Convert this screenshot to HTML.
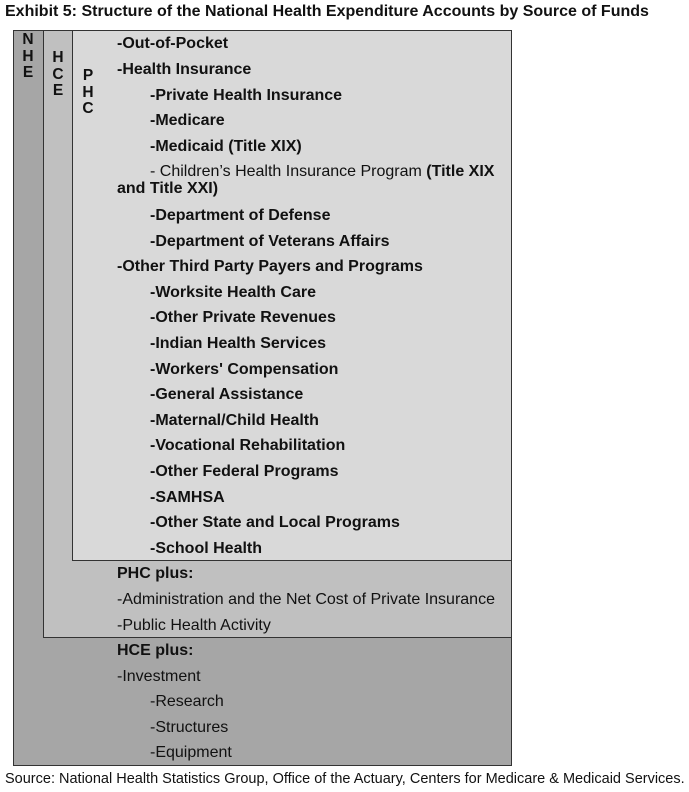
<!DOCTYPE html>
<html><head><meta charset="utf-8"><style>
body{margin:0;width:689px;height:792px;background:#fff;font-family:"Liberation Sans",Arial,sans-serif;color:#111;position:relative;overflow:hidden}
.b{position:absolute;box-sizing:border-box;border:1px solid #333}
.t{position:absolute;font-size:16px;white-space:nowrap;line-height:17px}
.bd{font-weight:bold}
.v{position:absolute;font-size:15.5px;font-weight:bold;line-height:16.5px;text-align:center;width:20px}
</style></head><body>
<div class="t bd" style="left:5px;top:3px;font-size:16px">Exhibit 5: Structure of the National Health Expenditure Accounts by Source of Funds</div>
<div class="b" style="left:13px;top:30px;width:499px;height:736px;background:#a6a6a6"></div>
<div class="b" style="left:43px;top:30px;width:469px;height:608px;background:#c0c0c0"></div>
<div class="b" style="left:72px;top:30px;width:440px;height:531px;background:#d9d9d9"></div>
<div class="v" style="left:18px;top:32px">N<br>H<br>E</div>
<div class="v" style="left:48px;top:50px">H<br>C<br>E</div>
<div class="v" style="left:78px;top:68px">P<br>H<br>C</div>
<div class="t bd" style="left:117px;top:35px">-Out-of-Pocket</div>
<div class="t bd" style="left:117px;top:61px">-Health Insurance</div>
<div class="t bd" style="left:150px;top:87px">-Private Health Insurance</div>
<div class="t bd" style="left:150px;top:112px">-Medicare</div>
<div class="t bd" style="left:150px;top:138px">-Medicaid (Title XIX)</div>
<div class="t" style="left:150px;top:163px">- Children’s Health Insurance Program <b>(Title XIX</b></div>
<div class="t bd" style="left:117px;top:180px">and Title XXI)</div>
<div class="t bd" style="left:150px;top:207px">-Department of Defense</div>
<div class="t bd" style="left:150px;top:233px">-Department of Veterans Affairs</div>
<div class="t bd" style="left:117px;top:258px">-Other Third Party Payers and Programs</div>
<div class="t bd" style="left:150px;top:284px">-Worksite Health Care</div>
<div class="t bd" style="left:150px;top:309px">-Other Private Revenues</div>
<div class="t bd" style="left:150px;top:335px">-Indian Health Services</div>
<div class="t bd" style="left:150px;top:361px">-Workers' Compensation</div>
<div class="t bd" style="left:150px;top:386px">-General Assistance</div>
<div class="t bd" style="left:150px;top:412px">-Maternal/Child Health</div>
<div class="t bd" style="left:150px;top:437px">-Vocational Rehabilitation</div>
<div class="t bd" style="left:150px;top:463px">-Other Federal Programs</div>
<div class="t bd" style="left:150px;top:489px">-SAMHSA</div>
<div class="t bd" style="left:150px;top:514px">-Other State and Local Programs</div>
<div class="t bd" style="left:150px;top:540px">-School Health</div>
<div class="t bd" style="left:117px;top:565px">PHC plus:</div>
<div class="t" style="left:117px;top:591px">-Administration and the Net Cost of Private Insurance</div>
<div class="t" style="left:117px;top:617px">-Public Health Activity</div>
<div class="t bd" style="left:117px;top:642px">HCE plus:</div>
<div class="t" style="left:117px;top:668px">-Investment</div>
<div class="t" style="left:150px;top:693px">-Research</div>
<div class="t" style="left:150px;top:719px">-Structures</div>
<div class="t" style="left:150px;top:744px">-Equipment</div>
<div class="t" style="left:5px;top:771px;font-size:14.5px">Source: National Health Statistics Group, Office of the Actuary, Centers for Medicare &amp; Medicaid Services.</div>
</body></html>
